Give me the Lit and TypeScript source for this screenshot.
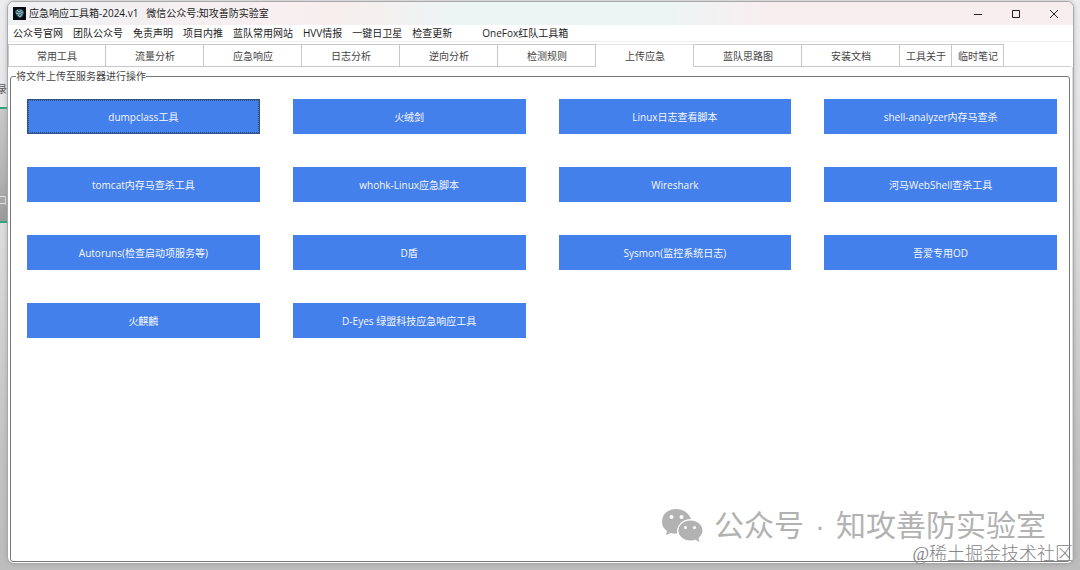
import { LitElement, html, css } from "lit";
import { customElement, state } from "lit/decorators.js";
import { classMap } from "lit/directives/class-map.js";

const MENU = ["公众号官网", "团队公众号", "免责声明", "项目内推", "蓝队常用网站", "HVV情报", "一键日卫星", "检查更新", "OneFox红队工具箱"];

const TABS = ["常用工具", "流量分析", "应急响应", "日志分析", "逆向分析", "检测规则", "上传应急", "蓝队思路图", "安装文档", "工具关于", "临时笔记"];

const TOOLS = [
  "dumpclass工具", "火绒剑", "Linux日志查看脚本", "shell-analyzer内存马查杀",
  "tomcat内存马查杀工具", "whohk-Linux应急脚本", "Wireshark", "河马WebShell查杀工具",
  "Autoruns(检查启动项服务等)", "D盾", "Sysmon(监控系统日志)", "吾爱专用OD",
  "火麒麟", "D-Eyes 绿盟科技应急响应工具",
];

@customElement("app-root")
export class AppRoot extends LitElement {
  @state() private tab = 6;
  @state() private tool = 0;

  static styles = css`
    :host {
      display: flex;
      position: relative;
      box-sizing: border-box;
      height: 100vh;
      padding: 1px 6px 6px 7px;
      overflow: hidden;
      background: linear-gradient(#ededf0, #dcdcdc 40%, #c2c2c2 80%, #bdbdbd);
      font: 10px/14px "Open Sans", "Noto Sans CJK SC", sans-serif;
      color: #1c1c1c;
    }
    * { box-sizing: border-box; }
    button { font: inherit; color: inherit; border: 0; padding: 0; margin: 0; background: none; white-space: nowrap; }
    .behind {
      position: absolute;
      left: 0;
      top: 107px;
      width: 7px;
      height: 116px;
      border: solid #2fa67a;
      border-width: 2px 0;
      background: linear-gradient(#c9c9c9, #b4b4b4 60%, #9a9a9a);
    }
    .sliver { position: absolute; left: 0; top: 82px; width: 7px; overflow: hidden; direction: rtl; color: #555; }
    .sliver.light { top: 193px; color: #eee; }
    .window {
      position: relative;
      flex: 1;
      display: flex;
      flex-direction: column;
      min-width: 0;
      border: 1px solid #a9a9a9;
      border-radius: 7px;
      background: #fff;
      overflow: hidden;
      box-shadow: 0 0 4px #8888;
    }
    .title {
      display: flex;
      align-items: center;
      height: 23px;
      flex: none;
      padding-left: 5px;
      background: linear-gradient(90deg, #f0f1f3, #f7eff1 24%, #f8eeee 31%, #edf4f4 42%, #edf4f4 62%, #f8eef0 71%, #f8eef0);
    }
    .logo { width: 13px; height: 13px; margin-right: 3px; }
    .title h1 { font: inherit; margin: 0; padding-bottom: 1px; white-space: pre; flex: 1; }
    .ctl { width: 38px; height: 23px; display: grid; place-items: center; }
    .ctl svg { width: 10px; height: 10px; fill: none; stroke: #222; }
    .menu { display: flex; gap: 10px; height: 16px; padding-left: 5px; flex: none; align-items: center; }
    .menu button:last-child { margin-left: 20px; }
    .tabs { display: flex; flex: none; height: 26px; padding: 2px 2px 0 0; border-top: 1px solid #eee; }
    .tab { padding: 0 28px 0 29px; border: 1px solid #c8c8c8; border-width: 1px 1px 1px 0; color: #444; }
    .tab:first-child { border-left-width: 1px; padding: 0 28px; }
    .tab.narrow { padding: 0 5px 0 6px; }
    .tab.on { border-bottom-color: transparent; border-top-color: #e4e4e4; }
    .rest { flex: 1; border-bottom: 1px solid #d0d0d0; }
    .page { flex: 1; display: flex; min-height: 0; padding: 2px 2px 1px; border-right: 1px solid #ddd; }
    fieldset {
      flex: 1;
      min-width: 0;
      margin: 0;
      padding: 16px 12px 16px 16px;
      border: 1px solid #777;
      border-radius: 3px;
    }
    legend { margin-left: -11px; padding: 0; color: #444; }
    .grid { display: grid; grid-template-columns: repeat(4, 1fr); gap: 33px; }
    .tool { height: 35px; background: #4480eb; color: #f4f7ff; }
    .tool.on { border: 1px solid #2f5488; outline: 1px dotted #34507c; outline-offset: -2px; }
    .mark {
      position: absolute;
      right: 34px;
      bottom: 24px;
      display: flex;
      align-items: center;
      gap: 11px;
      font: 30px/40px "Liberation Sans", "Noto Sans CJK SC", sans-serif;
      color: #b2b2b2;
      white-space: pre;
      pointer-events: none;
    }
    .mark svg { width: 42px; height: 36px; }
    .credit {
      position: absolute;
      right: 7px;
      bottom: 4px;
      font: 300 18px/24px "Liberation Serif", "Noto Sans CJK SC", serif;
      color: #858585;
      pointer-events: none;
    }
  `;

  render() {
    return html`
      <div class="behind"></div>
      <span class="sliver">录</span>
      <span class="sliver light">口</span>
      <main class="window">
        <header class="title">
          <svg class="logo" viewBox="0 0 13 13">
            <rect width="13" height="13" fill="#070d12" />
            <path d="M3 3l3-1 4 1 1 3-2 4-2 1-3-2-2-4z" fill="#3c6a72" />
            <path d="M4 3l2 2 3-2M3 6l3 1 4-2M5 8l2 2 2-3" fill="none" stroke="#b8d6d7" stroke-width=".8" />
          </svg>
          <h1>应急响应工具箱-2024.v1   微信公众号:知攻善防实验室</h1>
          <button class="ctl" aria-label="最小化"><svg viewBox="0 0 10 10"><path d="M1 5.500h8" /></svg></button>
          <button class="ctl" aria-label="最大化"><svg viewBox="0 0 10 10"><path d="M1.500 1.500h7v7h-7z" /></svg></button>
          <button class="ctl" aria-label="关闭"><svg viewBox="0 0 10 10"><path d="M1 1l8 8M9 1l-8 8" /></svg></button>
        </header>
        <nav class="menu">${MENU.map((m) => html`<button>${m}</button>`)}</nav>
        <div class="tabs" role="tablist">
          ${TABS.map(
            (t, i) => html`<button
              role="tab"
              aria-selected=${i === this.tab}
              class=${classMap({ tab: true, on: i === this.tab, narrow: i > 8 })}
              @click=${() => (this.tab = i)}
            >${t}</button>`
          )}
          <span class="rest"></span>
        </div>
        <section class="page">
          <fieldset>
            <legend>将文件上传至服务器进行操作</legend>
            <div class="grid">
              ${TOOLS.map(
                (t, i) => html`<button
                  class=${classMap({ tool: true, on: i === this.tool })}
                  @click=${() => (this.tool = i)}
                >${t}</button>`
              )}
            </div>
          </fieldset>
        </section>
      </main>
      <div class="mark">
        <svg viewBox="0 0 42 36" fill="#b2b2b2">
          <path d="M15 1C7 1 1 6 1 14c0 4 2 7 5 9l-1 4 5-2c2 .6 4 .7 6 .6C15 18 21 11 30 11 28 5 22 1 15 1z" />
          <path d="M29.500 12.500c-7 0-12 4.500-12 10s5 10 12 10c2 0 3-.3 5-.8l4 2.300-1-4c2-2 4-4 4-7.500 0-5.500-5-10-12-10z" />
          <g fill="#fff"><circle cx="10.500" cy="9" r="2" /><circle cx="20.500" cy="9" r="2" /><circle cx="24.500" cy="19.500" r="1.500" /><circle cx="33.500" cy="19.500" r="1.500" /></g>
        </svg>
        <span>公众号</span><span>·</span><span>知攻善防实验室</span>
      </div>
      <span class="credit">@稀土掘金技术社区</span>
    `;
  }
}
